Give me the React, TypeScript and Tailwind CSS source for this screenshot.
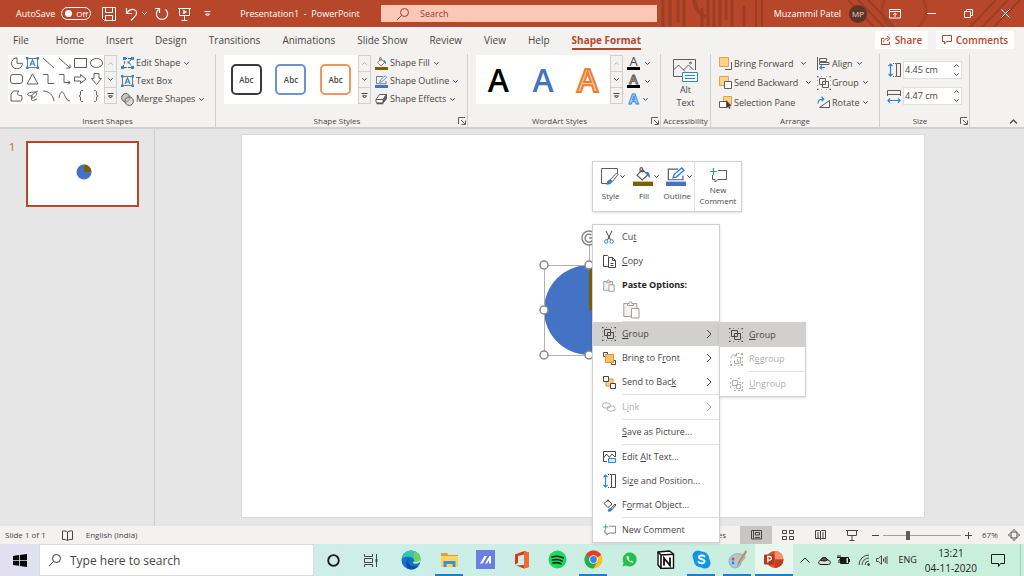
import React from 'react';
import { clsx } from 'clsx';

type IconProps = { w: number; h: number; className?: string; children: React.ReactNode };

const Icon: React.FC<IconProps> = ({ w, h, className, children }) => (
  <svg
    width={w}
    height={h}
    viewBox={`0 0 ${w} ${h}`}
    fill="none"
    stroke="currentColor"
    strokeLinejoin="round"
    className={clsx('shrink-0', className)}
    aria-hidden="true"
  >
    {children}
  </svg>
);

const Chevron: React.FC<{ className?: string }> = ({ className }) => (
  <Icon w={7} h={5} className={className}>
    <path d="M1.3 1.2 3.5 3.5 5.7 1.2" />
  </Icon>
);

const ChevronRight = () => (
  <Icon w={6} h={10}>
    <path d="M1 1l4 4-4 4" />
  </Icon>
);

/* ---------- shared icons ---------- */

const SearchIcon: React.FC<{ className?: string }> = ({ className }) => (
  <Icon w={14} h={14} className={className}>
    <circle cx="8.5" cy="5.5" r="4" />
    <path d="M5.6 8.4 1 13" />
  </Icon>
);

const TextBoxIcon = () => (
  <svg width="13" height="12" viewBox="0 0 13 12" className="shrink-0" aria-hidden="true">
    <rect x="1.5" y="1.5" width="10" height="9" fill="none" stroke="#797775" />
    <g fill="#2b88d8">
      <rect width="2.5" height="2.5" />
      <rect x="10.5" width="2.5" height="2.5" />
      <rect y="9.5" width="2.5" height="2.5" />
      <rect x="10.5" y="9.5" width="2.5" height="2.5" />
    </g>
    <path d="M4 9 6.5 2.8 9 9M5 7h3" fill="none" stroke="#2b88d8" strokeWidth="1.2" />
  </svg>
);

const EditShapeIcon = () => (
  <Icon w={13} h={12}>
    <path d="M3 1.5h7.5L8 5.5l3.5 5h-10l2-4z" strokeDasharray="3 1" />
    <g fill="#2b88d8" stroke="none">
      <rect x="2" width="3" height="3" />
      <rect x="10" width="3" height="3" />
      <rect y="9" width="3" height="3" />
      <rect x="10" y="9" width="3" height="3" />
      <rect x="6.5" y="4.5" width="2" height="2" />
    </g>
  </Icon>
);

const MergeIcon = () => (
  <Icon w={13} h={13}>
    <circle cx="4.8" cy="4.8" r="4.2" fill="#c8c6c4" />
    <circle cx="8.2" cy="8.2" r="4.2" fill="#c8c6c4" fillOpacity=".5" />
  </Icon>
);

const FillIcon: React.FC<{ large?: boolean }> = ({ large }) => (
  <svg width={large ? 20 : 13} height={large ? 19 : 13} viewBox="0 0 13 13" preserveAspectRatio="none" className="shrink-0" aria-hidden="true">
    <path d="M2.6 5.6 6.2 1.8l3.4 3.6-3.6 3.4zM6.2 3.8V1.2c0-1-1.6-1-1.6 0v2.2" fill="#fff" stroke="#605e5c" strokeWidth=".8" />
    <path d="M8.4 3.2c2 0 2.7 1 2.4 4.6L9.4 5.4z" fill="#2b7cd3" />
    <rect y="10" width="13" height="3" fill="#7f6000" />
  </svg>
);

const OutlineIcon: React.FC<{ large?: boolean }> = ({ large }) => (
  <svg width={large ? 20 : 13} height={large ? 19 : 13} viewBox="0 0 13 13" preserveAspectRatio="none" className="shrink-0" aria-hidden="true">
    <path d="M8 1.5H1.5v7.2h9.5V6" fill="none" stroke="#605e5c" strokeWidth=".8" />
    <path d="M4.6 7.4 5.4 5 10.2.7l1.5 1.5L6.9 6.7z" fill="#fff" stroke="#2b88d8" strokeWidth=".9" />
    <rect y="10" width="13" height="3" fill="#4472c4" />
  </svg>
);

const EffectsIcon = () => (
  <Icon w={13} h={12}>
    <path d="M1 6.5 4.5 1.5h7L8 6.5zM1 6.5V9l1 1h6l3.5-4.5v-4" fill="#fff" />
    <path d="M8 6.5 11.5 1.5v4L8 10z" fill="#605e5c" />
    <path d="M1.5 10.5h6.8" strokeWidth="1.6" />
  </Icon>
);

const GroupIcon = () => (
  <Icon w={14} h={14}>
    <rect x="2.5" y="2.5" width="6" height="6" />
    <rect x="5.5" y="5.5" width="6" height="6" />
    <path d="M0 .5h1.5M12.5.5H14M0 13.5h1.5M12.5 13.5H14" strokeWidth="1.4" />
    <path d="M4 .5h1M9 .5h1M4 13.5h1M9 13.5h1M.5 4v1M.5 9v1M13.5 4v1M13.5 9v1" opacity=".6" />
  </Icon>
);

const RegroupIcon = () => (
  <Icon w={13} h={13}>
    <path d="M4.5 7.5v3h6v-6h-3M7.5 6v3h2" />
    <path d="M1 5.5C1 2 4 1 6.5 2.5M6.5 0v3H4" />
    <g fill="currentColor" stroke="none">
      <rect x="11" width="2" height="2" />
      <rect y="11" width="2" height="2" />
      <rect x="11" y="11" width="2" height="2" />
    </g>
    <path d="M8 .5h1.5M4 12.5h1.5M8 12.5h1.5M.5 8v1.5M12.5 4v1.5M12.5 8v1.5" />
  </Icon>
);

const UngroupIcon = () => (
  <Icon w={13} h={13}>
    <rect x="2.5" y="2.5" width="5" height="5" />
    <rect x="6.5" y="6.5" width="4" height="4" />
    <path d="M0 .5h2M8 .5h2M.5 4v2M.5 8v2M4 10.5h1M12.5 4v2M9 4.5h4M4 12.5h2M8 12.5h5M12.5 8v4" strokeDasharray="2 1" />
  </Icon>
);

const BringForwardIcon = () => (
  <Icon w={13} h={13}>
    <path d="M12.5 5v7.5H6" />
    <rect x=".5" y=".5" width="9" height="9" fill="#fbd38a" stroke="#e8a045" />
  </Icon>
);

const SendBackwardIcon = () => (
  <Icon w={13} h={13}>
    <rect x=".5" y=".5" width="9" height="9" fill="#fbd38a" stroke="#e8a045" />
    <rect x="5.5" y="5.5" width="7" height="7" fill="#fff" />
  </Icon>
);

const SelectionPaneIcon = () => (
  <Icon w={13} h={13}>
    <rect x="4.5" y=".5" width="8" height="8" fill="#fbd38a" stroke="#e8a045" />
    <rect x=".5" y="5.5" width="7" height="6" fill="#fff" />
    <path d="M7.5 4.5v7.5l1.8-1.5 1 2.2 1-.4-1-2.2h2z" fill="#3b3a39" strokeWidth=".5" />
  </Icon>
);

const BringFrontIcon = () => (
  <Icon w={13} h={13}>
    <path d="M.5.5h4v4h-4zM8.500 8.500h4v4h-4z" />
    <rect x="2.5" y="2.5" width="8" height="8" fill="#fbc06a" stroke="#e8912d" />
  </Icon>
);

const SendBackIcon = () => (
  <Icon w={13} h={13}>
    <path d="M3 3h7v7H3z" fill="#fbd38a" stroke="#e8912d" />
    <rect x=".5" y=".5" width="5" height="5" fill="#fff" />
    <rect x="7.5" y="7.5" width="5" height="5" fill="#fff" />
  </Icon>
);

const AlignIcon = () => (
  <Icon w={13} h={13}>
    <path d="M.5 0v13M2.5 1.5h7v3h-7zM2.5 5.5H12v2H2.5z" />
    <path d="M8 10.5H3M5 8.5l-2 2 2 2" stroke="#2b88d8" strokeWidth="1.2" />
  </Icon>
);

const RotateIcon = () => (
  <Icon w={13} h={12}>
    <path d="M2.5 11.5 12.5 4.5v7z" />
    <path d="M1 7.5C1 4 3 3 6.5 3M4.5.8 6.8 3 4.5 5.2" stroke="#2b88d8" strokeWidth="1.2" />
  </Icon>
);

const HeightIcon = () => (
  <Icon w={13} h={14}>
    <path d="M2.5 1v12M.5 3l2-2 2 2M.5 11l2 2 2-2" stroke="#2b88d8" strokeWidth="1.2" />
    <path d="M5 .5h3M5 13.5h3" strokeDasharray="1 1" />
    <path d="M8.5.5h4v13h-4z" />
  </Icon>
);

const WidthIcon = () => (
  <Icon w={14} h={13}>
    <path d="M.5 6V.5h13V6M.5 4.5h13" />
    <path d="M1 10.5h12M3 8.5l-2 2 2 2M11 8.5l2 2-2 2" stroke="#2b88d8" strokeWidth="1.2" />
  </Icon>
);

const NewCommentIcon: React.FC<{ large?: boolean }> = ({ large }) => (
  <svg width={large ? 17 : 13} height={large ? 15 : 12} viewBox="0 0 17 15" fill="none" className="shrink-0" aria-hidden="true">
    <path d="M8 2.5h8.500v9H8L5 14v-2.500H2.500V7" stroke="#605e5c" />
    <path d="M3.5 0v7M0 3.5h7" stroke="#2fa36b" strokeWidth="1.2" />
  </svg>
);

const LauncherButton: React.FC<{ label: string }> = ({ label }) => (
  <button aria-label={label} className="text-[#605e5c]">
    <Icon w={8} h={8}>
      <path d="M.5 7V.5H7M3 3l4 4M7.5 3.5v4h-4" />
    </Icon>
  </button>
);

/* ---------- title bar ---------- */

const TitleBar = () => (
  <header className="relative flex h-[27px] shrink-0 items-center overflow-hidden bg-[#b7472a] text-[9px] text-white">
    <svg className="absolute top-0 right-0" width="366" height="27" fill="none" stroke="#9d3d24" aria-hidden="true">
      <path d="M5 0v27M12 0v27M20 0v22M26 0v27M44 8v19M50 0v27M56 0v27M62 0v27M68 0v20M74 0v27M86 6v21" strokeWidth="3" />
      <path d="M36 0c2 10 6 14 12 17" strokeWidth="4" />
      <path d="M98 0v27M104 0v27" strokeWidth="2" />
      <path d="M190 0l26 27M200 0l26 27M210 0l26 27M336 27l26-27M324 27l26-27M312 27l26-27" strokeWidth="2" />
      <circle cx="246" cy="10" r="22" strokeWidth="3" opacity=".6" />
    </svg>
    <div className="relative flex w-[381px] shrink-0 items-center pl-4">
      <label className="flex items-center gap-[6px]">
        AutoSave
        <span className="flex h-[13px] w-[30px] items-center gap-1 rounded-full border border-white pl-[3px] text-[8px]">
          <input type="checkbox" className="size-[7px] appearance-none rounded-full bg-white" />
          Off
        </span>
      </label>
      <div className="ml-[11px] flex items-center">
        <button aria-label="Save">
          <Icon w={14} h={14}>
            <path d="M.5.5h13v13h-11l-2-2zM3.500.500v5h7v-5M3.500 13.500v-5h7v5" />
          </Icon>
        </button>
        <button aria-label="Undo" className="ml-[9px]">
          <Icon w={13} h={14}>
            <path d="M1.5 1v5.500H7M1.500 6.500C5 1.500 9 1.500 11 4c2 3-1 5.500-5 9.500" strokeWidth="1.2" />
          </Icon>
        </button>
        <Chevron className="ml-[3px]" />
        <button aria-label="Redo" className="ml-[7px]">
          <Icon w={14} h={14}>
            <path d="M3.5 2.5a5.600 5.600 0 1 0 7 0M4.500 6V1.500H0" strokeWidth="1.2" />
          </Icon>
        </button>
        <button aria-label="Start from beginning" className="ml-[9px]">
          <Icon w={13} h={14}>
            <path d="M0 1.5h13M1.500 1.500v7h10v-7M6.500 8.500v5M3.500 13.500h6" />
            <path d="M5.5 3v4l3-2z" fill="currentColor" strokeWidth=".5" />
          </Icon>
        </button>
        <button aria-label="Customize quick access" className="ml-[13px]">
          <Icon w={7} h={6}>
            <path d="M.5.5h6M1.500 3l2 2 2-2z" />
          </Icon>
        </button>
      </div>
      <h1 className="ml-[29px] whitespace-pre">Presentation1  -  PowerPoint</h1>
    </div>
    <div className="relative flex h-[17px] w-[27%] items-center bg-[#fcc7b3] text-[#a4373a]">
      <SearchIcon className="ml-[15px]" />
      <input aria-label="Search" placeholder="Search" className="ml-[10px] min-w-0 flex-1 outline-none placeholder:text-[#a4373a]" />
    </div>
    <div className="relative ml-auto flex items-center pr-[14px]">
      <span>Muzammil Patel</span>
      <span className="ml-2 flex size-[18px] items-center justify-center rounded-full bg-[#5d3528] text-[8px] text-[#e8d5cd]">MP</span>
      <button aria-label="Ribbon display options" className="ml-[22px]">
        <Icon w={12} h={10}>
          <path d="M.5.5h11v8.500H.5zM.5 2.500h11M6 8V4M4.200 5.500 6 4l1.800 1.500" />
        </Icon>
      </button>
      <button aria-label="Minimize" className="ml-[26px]">
        <Icon w={9} h={9}>
          <path d="M0 4.5h9" />
        </Icon>
      </button>
      <button aria-label="Restore" className="ml-[28px]">
        <Icon w={9} h={9}>
          <path d="M.5 2.5h6v6h-6zM2.500 2.500v-2h6v6h-2" />
        </Icon>
      </button>
      <button aria-label="Close" className="ml-[28px]">
        <Icon w={9} h={9}>
          <path d="M.5.5l8 8M8.500.500l-8 8" />
        </Icon>
      </button>
    </div>
  </header>
);

/* ---------- tabs ---------- */

const tabs = ['Home', 'Insert', 'Design', 'Transitions', 'Animations', 'Slide Show', 'Review', 'View', 'Help'];

const TabRow = () => (
  <nav className="flex h-[26px] shrink-0 items-center justify-between bg-[#f3f2f1] pr-[10px] pl-[13px]">
    <div className="flex items-center gap-[22px] text-[10px]">
      <button className="pr-[5px]">File</button>
      {tabs.map((tab) => (
        <button key={tab}>{tab}</button>
      ))}
      <button className="border-b-2 border-[#b7472a] pt-[2px] font-bold text-[#b7472a]">Shape Format</button>
    </div>
    <div className="flex gap-2 text-[10px] font-semibold text-[#b7472a]">
      <button className="flex h-[18px] w-[53px] items-center justify-center gap-1 bg-white">
        <Icon w={10} h={10}>
          <path d="M3 3.5H.5v6h8V7M2.500 7C3 4.500 4.500 3.500 7 3.500M6 1l3 2.500L6 6" />
        </Icon>
        Share
      </button>
      <button className="flex h-[18px] w-[78px] items-center justify-center gap-1 bg-white">
        <Icon w={10} h={10}>
          <path d="M.5.5h9v6H4.500l-2 2.500V6.500h-2z" />
        </Icon>
        Comments
      </button>
    </div>
  </nav>
);

/* ---------- ribbon ---------- */

const GalleryScroll = () => (
  <div className="flex w-[13px] flex-col border border-[#d2d0ce]">
    <button aria-label="Row up" className="flex flex-1 items-center justify-center text-[#b8b6b4]">
      <Chevron className="rotate-180" />
    </button>
    <button aria-label="Row down" className="flex flex-1 items-center justify-center border-y border-[#d2d0ce]">
      <Chevron />
    </button>
    <button aria-label="More" className="flex flex-1 items-center justify-center">
      <Icon w={7} h={6}>
        <path d="M.5.5h6M1.500 2.800 3.500 5l2-2.200z" />
      </Icon>
    </button>
  </div>
);

const shapes: React.ReactNode[] = [
  <path d="M7 .8a5.5 5.5 0 1 0 5.5 5.5H7z" />,
  null,
  <path d="M1 1l11 10" />,
  <path d="M1 1l11 10M12 7.5V11H8.5" />,
  <rect x=".5" y="1.5" width="12" height="9" />,
  <ellipse cx="6.5" cy="6" rx="6" ry="4.5" />,
  <rect x=".5" y="1.5" width="12" height="9" rx="2.5" />,
  <path d="M6.5.8 12 11H1z" />,
  <path d="M1 1.5h5v9h6" />,
  <path d="M1 1.5h5v8h6M10 7.5l2 2-2 2" />,
  <path d="M.5 4h6V1.5L12 6l-5.5 4.5V8h-6z" />,
  <path d="M4 .5v5H1.5l5 6 5-6H9v-5z" />,
  <path d="M1 11V4l2.5-3H9C6 4 8 6 11.5 5.5c1 2 .5 5.5-1 5.500z" />,
  <path d="M12 1C8 2 3 8 6 8s7-6 3-6-9 1-7 3 5-1 4 2-1 5 5 2" />,
  <path d="M1 1c6 0 10 4 11 10" />,
  <path d="M1 8C2 2 4 0 6 4s3 7 6 7" />,
  <path d="M9 .5H7.5L6.5 1.5V5L5 6l1.5 1v3.5l1 1H9" />,
  <path d="M4 .5h1.5l1 1V5L8 6 6.5 7v3.5l-1 1H4" />,
];

const Command: React.FC<{ icon: React.ReactNode; children: React.ReactNode; menu?: boolean; wide?: boolean }> = ({ icon, children, menu, wide }) => (
  <button className="flex items-center gap-[2px] whitespace-nowrap">
    <span className="flex w-[13px] justify-center text-[#605e5c]">{icon}</span>
    {children}
    {menu && <Chevron className={wide ? 'ml-[5px]' : 'ml-px'} />}
  </button>
);

const RibbonGroup: React.FC<{ title: string; width: string; launcher?: boolean; children: React.ReactNode }> = ({ title, width, launcher, children }) => (
  <section className={clsx('flex shrink-0 flex-col border-r border-[#d2d0ce]', width)}>
    <div className="flex flex-1">{children}</div>
    <div className="flex h-3 items-center">
      <h2 className="flex-1 text-center text-[8px] whitespace-nowrap">{title}</h2>
      {launcher && (
        <span className="flex w-[9px]">
          <LauncherButton label={`${title} settings`} />
        </span>
      )}
    </div>
  </section>
);

const styleBoxes = ['border-[#3b3a39]', 'border-[#6f8fd6]', 'border-[#f0965a]'];

const wordArt = [
  'text-black',
  'text-[#4472c4]',
  'text-[#f8cbad] [-webkit-text-stroke:2px_#ed7d31]',
];

const SizeField: React.FC<{ label: string; value: string; icon: React.ReactNode }> = ({ label, value, icon }) => (
  <div className="flex items-center gap-[2px]">
    <span className="flex w-[14px] justify-center text-[#605e5c]">{icon}</span>
    <div className="flex h-[18px] w-[59px] items-center border border-[#e1dfdd] bg-white pr-px pl-px">
      <input aria-label={label} defaultValue={value} className="w-[48px] min-w-0 text-[9px] outline-none" />
      <div className="flex flex-col gap-1">
        <button aria-label={`Increase ${label}`}>
          <Chevron className="rotate-180" />
        </button>
        <button aria-label={`Decrease ${label}`}>
          <Chevron />
        </button>
      </div>
    </div>
  </div>
);

const Ribbon = () => (
  <div className="flex h-[76px] shrink-0 border-b-2 border-[#d2d0ce] bg-[#f3f2f1] pt-px text-[9px]">
    <RibbonGroup title="Insert Shapes" width="w-[216px]">
      <div className="mt-px flex h-[49px] pl-2">
        <div className="grid w-[96px] grid-cols-6 place-items-center bg-white text-[#605e5c]">
          {shapes.map((shape, i) => (shape ? <Icon key={i} w={13} h={12}>{shape}</Icon> : <TextBoxIcon key={i} />))}
        </div>
        <GalleryScroll />
      </div>
      <div className="ml-1 grid h-[54px] grid-rows-3">
        <Command icon={<EditShapeIcon />} menu>Edit Shape</Command>
        <Command icon={<TextBoxIcon />}>Text Box</Command>
        <Command icon={<MergeIcon />} menu>Merge Shapes</Command>
      </div>
    </RibbonGroup>

    <RibbonGroup title="Shape Styles" width="w-[252px]" launcher>
      <div className="mt-px flex h-[49px] pl-2">
        <div className="grid w-[134px] grid-cols-3 place-items-center bg-white">
          {styleBoxes.map((color) => (
            <button key={color} className={clsx('size-[31px] rounded-[5px] border-2 bg-white text-[8px] font-semibold', color)}>
              Abc
            </button>
          ))}
        </div>
        <GalleryScroll />
      </div>
      <div className="ml-1 grid h-[54px] grid-rows-3">
        <Command icon={<FillIcon />} menu>Shape Fill</Command>
        <Command icon={<OutlineIcon />} menu>Shape Outline</Command>
        <Command icon={<EffectsIcon />} menu>Shape Effects</Command>
      </div>
    </RibbonGroup>

    <RibbonGroup title="WordArt Styles" width="w-[193px]" launcher>
      <div className="mt-px flex h-[49px] pl-2">
        <div className="grid w-[134px] grid-cols-3 place-items-center bg-white">
          {wordArt.map((style) => (
            <button key={style} className={clsx('text-[32px] leading-8 font-semibold', style)}>
              A
            </button>
          ))}
        </div>
        <GalleryScroll />
      </div>
      <div className="ml-1 grid h-[54px] grid-rows-3 items-center">
        <button aria-label="Text fill" className="flex items-center gap-1">
          <span className="w-[13px] border-b-[3px] border-black text-[13px] leading-[11px]">A</span>
          <Chevron />
        </button>
        <button aria-label="Text outline" className="flex items-center gap-1">
          <span className="w-[13px] border-b-[3px] border-black text-[13px] leading-[11px] font-semibold text-white [-webkit-text-stroke:1px_#605e5c]">A</span>
          <Chevron />
        </button>
        <button aria-label="Text effects" className="flex items-center gap-[2px]">
          <span className="w-[13px] text-[14px] leading-[12px] font-bold text-[#d6eaf9] [-webkit-text-stroke:1px_#2b88d8]">A</span>
          <Chevron />
        </button>
      </div>
    </RibbonGroup>

    <RibbonGroup title="Accessibility" width="w-[50px]">
      <button className="flex flex-1 flex-col items-center pt-[5px] leading-[13px]">
        <Icon w={26} h={23} className="text-[#605e5c]">
          <path d="M22.5 11V.5H.5v17h9M.5 11l5-5 6.5 6.5M10.5 11l5-5 5 5" />
          <circle cx="17.5" cy="4" r="1" />
          <rect x="9.5" y="13.5" width="15" height="9" fill="#fff" stroke="#2b88d8" />
          <path d="M12 16.5h10M12 19.5h10" stroke="#2b88d8" />
        </Icon>
        <span className="pt-px">Alt</span>
        <span>Text</span>
      </button>
    </RibbonGroup>

    <RibbonGroup title="Arrange" width="w-[169px]">
      <div className="grid h-[58px] w-[106px] grid-rows-3 pl-2">
        <Command icon={<BringForwardIcon />} menu wide>Bring Forward</Command>
        <Command icon={<SendBackwardIcon />} menu wide>Send Backward</Command>
        <Command icon={<SelectionPaneIcon />}>Selection Pane</Command>
      </div>
      <div className="grid h-[58px] grid-rows-3">
        <Command icon={<AlignIcon />} menu>Align</Command>
        <Command icon={<GroupIcon />} menu>Group</Command>
        <Command icon={<RotateIcon />} menu>Rotate</Command>
      </div>
    </RibbonGroup>

    <RibbonGroup title="Size" width="w-[90px]" launcher>
      <div className="flex flex-col gap-2 pt-[7px] pl-[7px]">
        <SizeField label="Height" value="4.45 cm" icon={<HeightIcon />} />
        <SizeField label="Width" value="4.47 cm" icon={<WidthIcon />} />
      </div>
    </RibbonGroup>

    <button aria-label="Collapse ribbon" className="mr-[6px] ml-auto self-end pb-[3px]">
      <Icon w={9} h={5}>
        <path d="M1 4.5 4.5 1 8 4.5" strokeWidth="1.2" />
      </Icon>
    </button>
  </div>
);

/* ---------- context menu ---------- */

const ClipboardIcon: React.FC<{ large?: boolean }> = ({ large }) => (
  <svg width={large ? 17 : 12} height={large ? 19 : 13} viewBox="0 0 17 19" fill="#f3f2f1" stroke="#a19f9d" strokeWidth={large ? 1 : 1.4} className="shrink-0" aria-hidden="true">
    <path d="M.8 3.5h13v13H.8z" />
    <path d="M4.5 3.5V5.500h6v-2H9a1.500 2 0 0 0-3 0z" />
    <path d="M8.5 8.5h7.500v9.500H8.500z" fill="#fff" />
  </svg>
);

type MenuRowProps = { icon?: React.ReactNode; arrow?: boolean; active?: boolean; disabled?: boolean; children: React.ReactNode };

const MenuRow: React.FC<MenuRowProps> = ({ icon, arrow, active, disabled, children }) => (
  <button
    disabled={disabled}
    className={clsx('flex h-6 w-full items-center pr-[7px] pl-[9px] text-left whitespace-nowrap', active && 'bg-[#d2d0ce]', disabled && 'text-[#b1afad]')}
  >
    <span className="mr-[6px] flex w-[14px] justify-center">{icon}</span>
    <span className="flex-1">{children}</span>
    {arrow && <ChevronRight />}
  </button>
);

const MenuLine = () => <hr className="ml-[29px] border-[#e1dfdd]" />;

const ContextMenu = () => (
  <div className="absolute top-[89px] left-[350px] z-10 w-[128px] border border-[#d2d0ce] bg-white text-[9px] shadow-sm">
    <MenuRow
      icon={
        <Icon w={10} h={13}>
          <path d="M2 0l4.5 9M8 0 3.5 9" />
          <circle cx="2.2" cy="10.5" r="1.7" stroke="#2b88d8" />
          <circle cx="7.8" cy="10.5" r="1.7" stroke="#2b88d8" />
        </Icon>
      }
    >
      Cu<u>t</u>
    </MenuRow>
    <MenuRow
      icon={
        <Icon w={13} h={13}>
          <path d="M5 11.5H.5V.5h4l1 1M5.500 2.500h4l3 3v7h-7zM9.500 2.500v3h3M7.500 8.500h3M7.500 10.500h3" />
        </Icon>
      }
    >
      <u>C</u>opy
    </MenuRow>
    <div className="flex h-6 items-center gap-[7px] pl-[10px] font-bold text-[#252423]">
      <ClipboardIcon />
      <span className="whitespace-nowrap">Paste Options:</span>
    </div>
    <button aria-label="Keep source formatting" className="ml-[30px] flex h-6 items-center">
      <ClipboardIcon large />
    </button>
    <MenuLine />
    <div className="relative">
      <MenuRow icon={<GroupIcon />} arrow active>
        <u>G</u>roup
      </MenuRow>
      <div className="absolute top-0 left-full w-[87px] border border-[#d2d0ce] bg-white shadow-sm">
        <MenuRow icon={<GroupIcon />} active>
          <u>G</u>roup
        </MenuRow>
        <MenuRow icon={<RegroupIcon />} disabled>
          R<u>e</u>group
        </MenuRow>
        <MenuLine />
        <MenuRow icon={<UngroupIcon />} disabled>
          <u>U</u>ngroup
        </MenuRow>
      </div>
    </div>
    <MenuRow icon={<BringFrontIcon />} arrow>
      Bring to F<u>r</u>ont
    </MenuRow>
    <MenuRow icon={<SendBackIcon />} arrow>
      Send to Bac<u>k</u>
    </MenuRow>
    <MenuLine />
    <MenuRow
      icon={
        <Icon w={14} h={10}>
          <rect x=".5" y="1" width="8" height="5" rx="2.5" />
          <rect x="5" y="4" width="8" height="5" rx="2.5" />
        </Icon>
      }
      arrow
      disabled
    >
      L<u>i</u>nk
    </MenuRow>
    <MenuLine />
    <MenuRow>
      <u>S</u>ave as Picture...
    </MenuRow>
    <MenuLine />
    <MenuRow
      icon={
        <Icon w={13} h={12}>
          <path d="M12.5 6V.5H.5v10H4M.5 7l3-4 3 3.500M6.500 6l2.500-3 3 3" />
          <rect x="5.5" y="7.5" width="7" height="4" fill="#d6eaf9" stroke="#2b88d8" />
        </Icon>
      }
    >
      Edit <u>A</u>lt Text...
    </MenuRow>
    <MenuRow icon={<HeightIcon />}>
      Si<u>z</u>e and Position...
    </MenuRow>
    <MenuRow
      icon={
        <Icon w={13} h={13}>
          <path d="M1 4.5 5 1l4 4-4 3.500zM5 3V.5" />
          <path d="M5 12c1-3 2-3 3.5-2C9 12 7 12.500 5 12z" fill="#2b88d8" stroke="#2b88d8" />
          <path d="M8 9.5 12 5l1 1-4 4.500z" />
        </Icon>
      }
    >
      F<u>o</u>rmat Object...
    </MenuRow>
    <MenuLine />
    <MenuRow icon={<NewCommentIcon />}>New Comment</MenuRow>
  </div>
);

const MiniToolbar = () => (
  <div className="absolute top-[26px] left-[350px] z-10 flex h-[51px] w-[150px] border border-[#d2d0ce] bg-white text-[8px] shadow-sm">
    <div className="grid flex-1 grid-cols-3 border-r border-[#e1dfdd] pt-[5px] pl-px">
      <button className="flex flex-col items-center gap-1">
        <span className="flex items-center pl-[5px]">
          <Icon w={18} h={19} className="text-[#605e5c]">
            <path d="M16.5 8V1.5H.5v15H9" />
            <path d="M9 13 15.5 6l1.500 1.500-5.500 7z" fill="#fff" />
            <path d="M5 17c2 0 1-4 4-4 2.5.5 2.500 3-1 4z" fill="#2b88d8" stroke="#2b7cd3" />
          </Icon>
          <Chevron />
        </span>
        Style
      </button>
      <button className="flex flex-col items-center gap-1">
        <span className="flex items-center pl-[5px]">
          <FillIcon large />
          <Chevron />
        </span>
        Fill
      </button>
      <button className="flex flex-col items-center gap-1">
        <span className="flex items-center pl-[5px]">
          <OutlineIcon large />
          <Chevron />
        </span>
        Outline
      </button>
    </div>
    <button className="flex w-[46px] flex-col items-center pt-[6px] leading-[11px]">
      <NewCommentIcon large />
      <span className="mt-px">New</span>
      <span>Comment</span>
    </button>
  </div>
);

/* ---------- workspace ---------- */

const handles = [
  [8, 35],
  [53, 35],
  [98, 35],
  [8, 80],
  [98, 80],
  [8, 125],
  [53, 125],
  [98, 125],
];

const Workspace = () => (
  <main className="flex flex-1 bg-[#e6e6e6]">
    <aside className="flex w-[155px] shrink-0 items-start border-r border-[#cfcdcb] pt-3 pl-[9px]">
      <span className="w-[17px] text-[11px] leading-3 text-[#d0593c]">1</span>
      <button aria-label="Slide 1" className="flex h-[66px] w-[113px] border-2 border-[#b7472a] bg-white">
        <svg width="16" height="16" viewBox="0 0 16 16" className="mt-[21px] ml-[48px]" aria-hidden="true">
          <circle cx="8" cy="8" r="7.5" fill="#4472c4" />
          <path d="M8 8V.5A7.5 7.5 0 0 1 15.5 8z" fill="#7f6000" />
        </svg>
      </button>
    </aside>
    <div className="flex flex-1 pt-[5px] pr-[99px] pb-2 pl-[86px]">
      <div className="relative flex-1 border border-[#dcdad8] bg-white">
        <svg className="absolute top-[95px] left-[294px]" width="106" height="133" viewBox="0 0 106 133" fill="none" aria-hidden="true">
          <circle cx="53" cy="80" r="45" fill="#4472c4" />
          <path d="M53 80V35a45 45 0 0 1 45 45z" fill="#7f6000" />
          <path d="M8.5 35.5h90v90h-90zM53.500 15v20" stroke="#b3b1af" />
          {handles.map(([x, y]) => (
            <circle key={`${x}-${y}`} cx={x} cy={y} r="4" fill="#fff" stroke="#8a8886" strokeWidth="1.5" />
          ))}
          <circle cx="53" cy="8" r="7" fill="#fff" stroke="#8a8886" strokeWidth="1.5" />
          <path d="M55.5 5a4 4 0 1 0 1.500 4M53 8h4" stroke="#8a8886" strokeWidth="1.5" />
        </svg>
        <MiniToolbar />
        <ContextMenu />
      </div>
    </div>
  </main>
);

/* ---------- status bar ---------- */

const StatusBar = () => (
  <footer className="flex h-[18px] shrink-0 items-center bg-[#f3f2f1] pr-1 pl-[5px] text-[8px]">
    <span>Slide 1 of 1</span>
    <button aria-label="Spelling" className="ml-4">
      <Icon w={11} h={11}>
        <path d="M5.5 2C4 .8 2 .8.5 1v8.500c2-.2 3.500 0 5 1 1.500-1 3-1.200 5-1V1c-1.500-.2-3.500-.2-5 1zM5.500 2v8.500" />
      </Icon>
    </button>
    <span className="ml-[13px]">English (India)</span>
    <button className="mr-[14px] ml-auto">Notes</button>
    <button aria-label="Normal view" className="flex h-full w-8 items-center justify-center bg-[#c8c6c4]">
      <Icon w={11} h={10}>
        <path d="M.5.5h10v8.500H.5zM2.500.500v8.500M4.500 2.500h4v2.500h-4zM4 7.500h5" />
      </Icon>
    </button>
    <button aria-label="Slide sorter" className="flex w-8 justify-center">
      <Icon w={12} h={10}>
        <path d="M.5.5h4v3h-4zM7.500.500h4v3h-4zM.5 6.500h4v3h-4zM7.500 6.500h4v3h-4z" />
      </Icon>
    </button>
    <button aria-label="Reading view" className="flex w-8 justify-center">
      <Icon w={11} h={10}>
        <path d="M.5.5h4l1 1 1-1h4V8.500h-4l-1 1-1-1h-4zM5.500 1.500v8M2 3h2M2 5h2M2 7h2M7 3h2M7 5h2M7 7h2" />
      </Icon>
    </button>
    <button aria-label="Slide show" className="flex w-8 justify-center">
      <Icon w={12} h={11}>
        <path d="M0 .5h12M1.500.500v5h9v-5M6 5.500v5M3.500 10.500h5" />
      </Icon>
    </button>
    <button aria-label="Zoom out" className="ml-1">
      <Icon w={7} h={7}>
        <path d="M0 3.5h7" />
      </Icon>
    </button>
    <input
      type="range"
      aria-label="Zoom"
      min={10}
      max={190}
      defaultValue={67}
      className="mx-1 h-3 w-[78px] appearance-none bg-[linear-gradient(#a19f9d,#a19f9d)] bg-[length:100%_1px] bg-center bg-no-repeat [&::-webkit-slider-thumb]:h-[9px] [&::-webkit-slider-thumb]:w-1 [&::-webkit-slider-thumb]:appearance-none [&::-webkit-slider-thumb]:bg-[#605e5c]"
    />
    <button aria-label="Zoom in">
      <Icon w={7} h={7}>
        <path d="M0 3.5h7M3.500 0v7" />
      </Icon>
    </button>
    <span className="ml-[10px] w-[18px]">67%</span>
    <button aria-label="Fit to window" className="ml-2">
      <Icon w={12} h={12}>
        <rect x="3" y="3" width="6" height="6" />
        <path d="M4.5 1.8 6 .5l1.500 1.300M4.500 10.200 6 11.500l1.500-1.300M1.800 4.500.500 6l1.300 1.500M10.200 4.500 11.500 6l-1.300 1.500" />
      </Icon>
    </button>
  </footer>
);

/* ---------- taskbar ---------- */

const apps: { name: string; running?: boolean; art: React.ReactNode }[] = [
  {
    name: 'File Explorer',
    running: true,
    art: (
      <>
        <path d="M1 3h6l1.5 2H18v3H1z" fill="#e0a030" />
        <path d="M1 6h17v11H1z" fill="#fbd45c" />
        <path d="M3.5 17v-6h12v6h-3v-3h-6v3z" fill="#3f8fd8" />
      </>
    ),
  },
  {
    name: 'Mi',
    art: (
      <>
        <rect width="19" height="19" fill="#6a7fe0" />
        <path d="M4 13.5 8.500 6H11l-4.500 7.500zM9 13.500 13.500 6h1.500v7.500h-2V10l-2 3.500z" fill="#fff" />
      </>
    ),
  },
  {
    name: 'Office',
    art: (
      <>
        <path d="M12 1 3 4.5v10L6 13V6l6-1.500V15l-8 .5L12 18.500l5-1.500V2.500z" fill="#d8391b" />
        <path d="M12 1v17.5l5-1.500V2.500z" fill="#ef6a36" />
      </>
    ),
  },
  {
    name: 'Spotify',
    art: (
      <>
        <circle cx="9.5" cy="9.5" r="9" fill="#1ed760" />
        <path d="M4 7c4-1.2 8-1 11.500 1M4.500 10c3.500-1 6.500-.8 9.500 1M5 13c3-.8 5.500-.5 8 .8" stroke="#10291a" strokeWidth="1.6" strokeLinecap="round" />
      </>
    ),
  },
  {
    name: 'Chrome',
    running: true,
    art: (
      <>
        <circle cx="9.5" cy="9.5" r="9" fill="#fbc116" />
        <path d="M9.5 9.5 1.700 5A9 9 0 0 1 17.300 5z" fill="#e33b2e" />
        <path d="M1.7 5A9 9 0 0 0 9.500 18.500L13.400 11.800 9.500 9.500z" fill="#2da94f" />
        <circle cx="9.5" cy="9.5" r="4.3" fill="#fff" />
        <circle cx="9.5" cy="9.5" r="3.4" fill="#3b82f0" />
      </>
    ),
  },
  {
    name: 'WhatsApp',
    art: (
      <>
        <path d="M2.5 16.5 3.600 13a7 7 0 1 1 2.500 2.500z" fill="#25c04e" />
        <path d="M7 6c-1 1-.5 3 1.500 4.800S12.500 13 13.300 12l-1.800-1.500-1 .7c-1-.5-1.500-1-2-2l.7-1L8.300 6z" fill="#fff" />
      </>
    ),
  },
  {
    name: 'Notion',
    art: (
      <>
        <path d="M2 2l11.500-1L17.500 4v14L5 18.500 2 15z" fill="#fff" stroke="#111" strokeWidth="1.4" />
        <path d="M2 2l3 3v13.500M5 5l12.500-.8" stroke="#111" strokeWidth="1.6" />
        <path d="M8 15.5V8l6 7.500V7.500" stroke="#111" strokeWidth="1.8" />
      </>
    ),
  },
  {
    name: 'Skype',
    running: true,
    art: (
      <>
        <circle cx="6" cy="6" r="5.5" fill="#1a8fe0" />
        <circle cx="13" cy="13" r="5.5" fill="#1a8fe0" />
        <circle cx="9.5" cy="9.5" r="8" fill="#0a9be8" />
        <path d="M12.5 6.5c-1-1.500-5.500-1.500-5.500.8s5.500 1.500 5.500 4-5 2.500-6 .5" stroke="#fff" strokeWidth="2" strokeLinecap="round" />
      </>
    ),
  },
  {
    name: 'Paint',
    running: true,
    art: (
      <>
        <path d="M1 11C1 6 7 2.5 13 4s4 5 1.500 6.500S14 16 9 17.500 1 15 1 11z" fill="#a9c9dd" stroke="#7aa3bd" strokeWidth=".8" />
        <circle cx="5" cy="9" r="1.5" fill="#d94a3a" />
        <circle cx="9" cy="7" r="1.4" fill="#f2b632" />
        <circle cx="5" cy="13" r="1.4" fill="#3b82c4" />
        <path d="M17.5 0 10 12l-1 5 3-4L19 2z" fill="#c98d4a" />
      </>
    ),
  },
];

const Taskbar = () => (
  <div className="flex h-8 shrink-0 items-stretch bg-linear-to-r from-[#e2dff0] via-[#cdeeea] via-35% to-[#c8efd9] text-[#1b1a19]">
    <button aria-label="Start" className="flex w-[39px] items-center justify-center">
      <svg width="14" height="13" viewBox="0 0 14 13" aria-hidden="true">
        <path d="M0 2l6-.9V6H0zM6.8 1 14 0v6H6.800zM0 6.800h6v5L0 11zM6.800 6.800H14V13l-7.200-1z" />
      </svg>
    </button>
    <div className="flex w-[275px] items-center border border-[#d8dcdc] bg-white pl-2 text-[#3b3a39]">
      <SearchIcon />
      <input aria-label="Type here to search" placeholder="Type here to search" className="ml-2 min-w-0 flex-1 pt-[2px] text-xs outline-none placeholder:text-[#484644]" />
    </div>
    <button aria-label="Cortana" className="flex w-[38px] items-center justify-center">
      <Icon w={13} h={13}>
        <circle cx="6.5" cy="6.5" r="5.3" strokeWidth="1.8" />
      </Icon>
    </button>
    <button aria-label="Task view" className="flex w-[38px] items-center justify-center text-[#484644]">
      <Icon w={14} h={13}>
        <path d="M.5 0v2.5h8V0M.5 4.500h8v4h-8zM.5 13v-2.500h8V13M12.500 0v13" />
        <path d="M11.5 5h2v3h-2z" fill="currentColor" stroke="none" />
      </Icon>
    </button>
    <button aria-label="Edge" className="flex w-[41px] items-center justify-center">
      <Icon w={20} h={20}>
        <circle cx="10" cy="10" r="9.5" fill="#1373c8" stroke="none" />
        <path d="M.6 9C1.5 3.5 5.500.5 10 .5c6 0 10 4.500 9.400 8.500-.5 3-4 4.500-7 3.500 1.500-2 .5-5-3-5.500C5 6.500 1.500 7 .6 9z" fill="#35c4b5" stroke="none" />
        <path d="M13 1c4 1.5 7 5 6.400 8-.5 3-4 4.500-7 3.500 1-1.500 1.200-3 .3-4z" fill="#6bd463" stroke="none" />
        <path d="M8.5 8c-3 3 0 8.500 4.500 8.500 2 0 4-.5 5-1.500-1.500 3-5 4.800-8 4.500C5 19 3 12 8.500 8z" fill="#0f4fa3" stroke="none" />
        <path d="M12.2 12.3c2 1.200 5.500.8 7-1.800" stroke="#d0efea" strokeWidth="1.5" />
      </Icon>
    </button>
    {apps.map(({ name, running, art }) => (
      <button key={name} aria-label={name} className={clsx('mx-1 flex w-7 items-center justify-center border-b-2 pt-px', running ? 'border-[#1a7fd0]' : 'border-transparent')}>
        <svg width="19" height="19" viewBox="0 0 19 19" fill="none" aria-hidden="true">
          {art}
        </svg>
      </button>
    ))}
    <button aria-label="PowerPoint" className="flex w-[38px] items-center justify-center border-b-2 border-[#1a7fd0] bg-[#e9f8ef] pt-px">
      <svg width="20" height="19" viewBox="0 0 20 19" fill="none" aria-hidden="true">
        <circle cx="11" cy="9.5" r="8.5" fill="#d35230" />
        <path d="M11 1a8.5 8.5 0 0 1 8.500 8.500H11z" fill="#ff8f6b" />
        <path d="M11 9.5h8.500a8.500 8.500 0 0 1-8.500 8.500z" fill="#c43e1c" />
        <rect y="4.5" width="10" height="10" rx="1" fill="#b7361a" />
        <path d="M3.8 12.5v-6h1.800a1.700 1.700 0 0 1 0 3.600H3.800" stroke="#fff" strokeWidth="1.3" />
      </svg>
    </button>

    <div className="ml-auto flex items-center pr-[3px]">
      <button aria-label="Show hidden icons">
        <Icon w={10} h={6}>
          <path d="M.5 5.5 5 1l4.500 4.500" />
        </Icon>
      </button>
      <Icon w={13} h={9} className="ml-2">
        <path d="M3 8.5C0 8.500 0 5 2.500 4.500 3 1 8 0 9.500 4c3-.3 4 4.500 1 4.500z" fill="#e1dfdd" />
        <path d="M3 4.5C4 1 8 1 9.500 4L7 5z" fill="#605e5c" />
      </Icon>
      <Icon w={13} h={10} className="ml-[6px]">
        <path d="M3.5 2.5h8v6h-8zM12.500 4v3" />
        <path d="M4 3h5v5H4z" fill="currentColor" />
        <path d="M1 0v2M3 0v2M0 2.5h4v1.500L2 5v3" />
      </Icon>
      <Icon w={12} h={12} className="ml-2 text-[#484644]">
        <path d="M1 11A10 10 0 0 1 11 1M4 11a7 7 0 0 1 7-7M7 11a4 4 0 0 1 4-4" />
        <circle cx="10.5" cy="10.5" r="1" fill="currentColor" />
      </Icon>
      <Icon w={12} h={10} className="ml-[6px] text-[#484644]">
        <path d="M.5 3.5H2.500L5.500.800v8.400L2.500 6.500H.5zM7.500 3.500v3M9.200 2v6M11 1v8" />
      </Icon>
      <span className="ml-[10px] text-[9px]">ENG</span>
      <div className="ml-2 pt-px text-center text-[10px] leading-[15px]">
        <div>13:21</div>
        <div>04-11-2020</div>
      </div>
      <button aria-label="Notifications" className="ml-[14px]">
        <Icon w={14} h={14}>
          <path d="M.5 1.5h13v9H9.500l-2 3v-3h-7z" />
        </Icon>
      </button>
      <span className="ml-[15px] h-8 border-l border-[#a9cdbb]" />
    </div>
  </div>
);

export default function App() {
  return (
    <div className="flex min-h-screen flex-col bg-[#f3f2f1] font-['Open_Sans','Noto_Sans',sans-serif] text-[#484644]">
      <TitleBar />
      <TabRow />
      <Ribbon />
      <Workspace />
      <StatusBar />
      <Taskbar />
    </div>
  );
}
